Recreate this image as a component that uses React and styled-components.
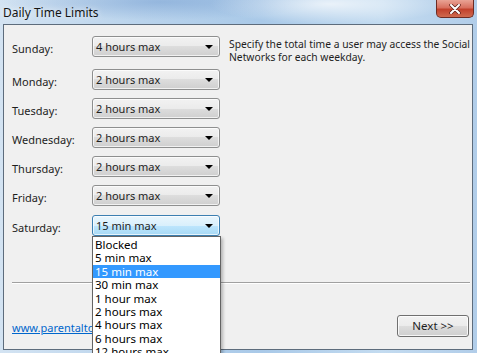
import React from 'react'
import styled, { createGlobalStyle } from 'styled-components'

const Global = createGlobalStyle`
  html, body {
    margin: 0;
    padding: 0;
    width: 477px;
    height: 353px;
    overflow: hidden;
    background: #8aa6bf;
  }
  * { box-sizing: border-box; }
`

const Window = styled.div`
  width: 477px;
  height: 353px;
  display: flex;
  flex-direction: column;
  font-family: "Noto Sans", "Liberation Sans", sans-serif;
  font-size: 11px;
  color: #1e1e1e;
  background:
    radial-gradient(ellipse 120px 20px at 330px 4px, rgba(255,255,255,0.7), transparent),
    radial-gradient(ellipse 160px 18px at 160px 2px, rgba(120,160,210,0.55), transparent),
    linear-gradient(90deg, #d3e3f2 0%, #b9d3ec 30%, #a9c9e8 55%, #c3dbf0 80%, #b1cde9 100%);
  position: relative;
`

const TitleBar = styled.div`
  height: 24px;
  flex: none;
  display: flex;
  align-items: center;
  justify-content: space-between;
  padding-left: 3px;
`

const Title = styled.span`
  font-size: 12px;
  color: #141414;
  text-shadow: 0 0 6px rgba(255,255,255,0.9);
  margin-top: 1px;
`

const CloseButton = styled.div`
  align-self: flex-start;
  width: 38px;
  height: 18px;
  margin-right: 3px;
  border: 1px solid #6d2c24;
  border-top: none;
  border-radius: 0 0 5px 5px;
  background: linear-gradient(180deg, #e9a395 0%, #d8705f 45%, #c2412c 55%, #cf6a4f 100%);
  display: flex;
  align-items: center;
  justify-content: center;
`

const Client = styled.div`
  flex: 1;
  margin: 0 4px 3px 3px;
  border: 1px solid #5d6c7c;
  background: #f0f0f0;
  display: flex;
  flex-direction: column;
  position: relative;
`

const Body = styled.div`
  display: flex;
  padding: 11px 0 0 8px;
  height: 257px;
`

const Days = styled.div`
  flex: none;
  display: flex;
  flex-direction: column;
  width: 208px;
`

const Row = styled.div`
  display: flex;
  align-items: center;
  height: 21px;
  margin-bottom: ${p => p.$gap}px;
`

const Label = styled.span`
  width: 80px;
  padding-top: 4px;
`

const Select = styled.div`
  position: relative;
  width: 128px;
  height: 21px;
  border: 1px solid ${p => (p.$focused ? '#3c7fb1' : '#8e8f8f')};
  border-radius: 3px;
  background: ${p =>
    p.$focused
      ? 'linear-gradient(180deg, #eaf6fd 0%, #d9f0fc 50%, #bee6fd 50%, #a7d9f5 100%)'
      : 'linear-gradient(180deg, #f2f2f2 0%, #ebebeb 50%, #dddddd 50%, #cfcfcf 100%)'};
  display: flex;
  align-items: center;
  justify-content: space-between;
  padding: 0 6px 0 3px;
  box-shadow: inset 0 0 0 1px rgba(255,255,255,0.7);
`

const Arrow = styled.span`
  width: 0;
  height: 0;
  border-left: 4px solid transparent;
  border-right: 4px solid transparent;
  border-top: 4px solid #000;
`

const Description = styled.p`
  flex: none;
  margin: 2px 0 0 9px;
  line-height: 13px;
  width: 250px;
  font-size: 10.3px;
`

const Separator = styled.div`
  height: 2px;
  margin: 0 2px 0 8px;
  border-top: 1px solid #a0a0a0;
  border-bottom: 1px solid #fff;
`

const Footer = styled.div`
  flex: 1;
  display: flex;
  align-items: center;
  justify-content: space-between;
  padding: 18px 3px 0 8px;
`

const Link = styled.a`
  color: #0066cc;
  text-decoration: underline;
  margin-top: 3px;
`

const Button = styled.div`
  width: 72px;
  height: 22px;
  border: 1px solid #707070;
  border-radius: 3px;
  background: linear-gradient(180deg, #f2f2f2 0%, #ebebeb 50%, #dddddd 50%, #cfcfcf 100%);
  box-shadow: inset 0 0 0 1px rgba(255,255,255,0.8);
  display: flex;
  align-items: center;
  justify-content: center;
  font-size: 11.5px;
`

const List = styled.ul`
  position: absolute;
  left: 88px;
  top: 211px;
  width: 129px;
  margin: 0;
  padding: 1px 0;
  list-style: none;
  background: #fff;
  border: 1px solid #646464;
  box-shadow: 2px 2px 3px rgba(0,0,0,0.25);
  z-index: 5;
`

const Item = styled.li`
  height: 13.4px;
  line-height: 13px;
  padding-left: 2px;
  font-size: 11.5px;
  background: ${p => (p.$active ? '#3399ff' : 'transparent')};
  color: ${p => (p.$active ? '#fff' : '#000')};
  white-space: nowrap;
`

const days = [
  ['Sunday:', '4 hours max', 12],
  ['Monday:', '2 hours max', 8],
  ['Tuesday:', '2 hours max', 8],
  ['Wednesday:', '2 hours max', 8],
  ['Thursday:', '2 hours max', 8],
  ['Friday:', '2 hours max', 9],
  ['Saturday:', '15 min max', 0],
]

const options = [
  'Blocked', '5 min max', '15 min max', '30 min max', '1 hour max',
  '2 hours max', '4 hours max', '6 hours max', '12 hours max',
]

export default function App() {
  return (
    <>
      <Global />
      <Window>
        <TitleBar>
          <Title>Daily Time Limits</Title>
          <CloseButton>
            <svg width="12" height="10" viewBox="0 0 12 10">
              <path d="M2 1 L10 9 M10 1 L2 9" stroke="#5a1f18" strokeWidth="3.4" strokeLinecap="round" />
              <path d="M2 1 L10 9 M10 1 L2 9" stroke="#fff" strokeWidth="2" strokeLinecap="round" />
            </svg>
          </CloseButton>
        </TitleBar>
        <Client>
          <Body>
            <Days>
              {days.map(([day, value, gap]) => (
                <Row key={day} $gap={gap}>
                  <Label>{day}</Label>
                  <Select $focused={day === 'Saturday:'}>
                    <span>{value}</span>
                    <Arrow />
                  </Select>
                </Row>
              ))}
            </Days>
            <Description>
              Specify the total time a user may access the Social Networks for each weekday.
            </Description>
          </Body>
          <Separator />
          <Footer>
            <Link href="#">www.parentaltools.net</Link>
            <Button>Next &gt;&gt;</Button>
          </Footer>
          <List>
            {options.map(o => (
              <Item key={o} $active={o === '15 min max'}>{o}</Item>
            ))}
          </List>
        </Client>
      </Window>
    </>
  )
}
